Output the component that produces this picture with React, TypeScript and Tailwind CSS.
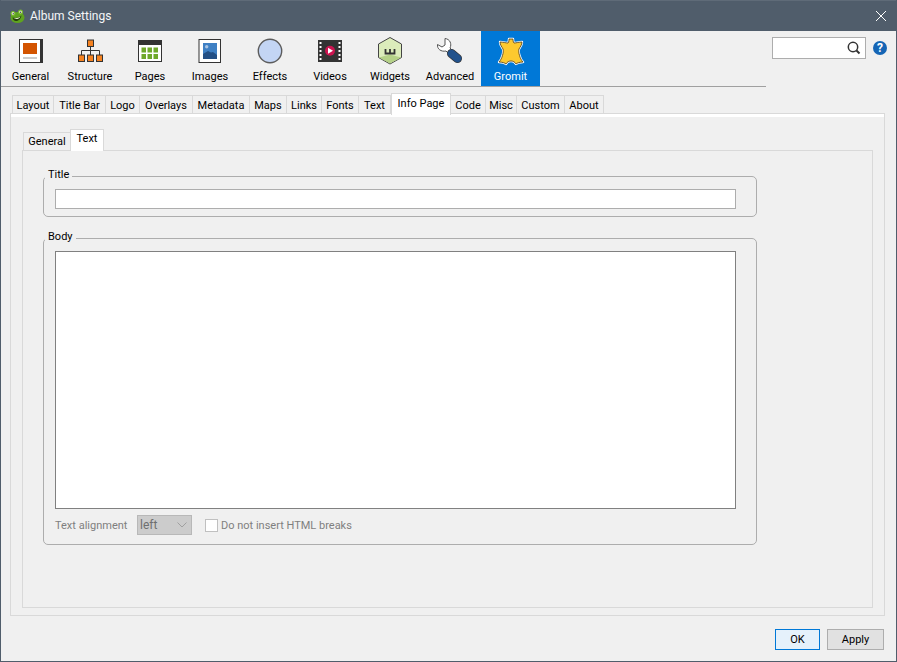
const font = "font-['Roboto','Noto_Sans',sans-serif]"

function GeneralIcon() {
  return (
    <svg width="32" height="32" viewBox="0 0 32 32">
      <rect x="4.5" y="4.5" width="23" height="23" fill="#fff" stroke="#333" />
      <rect x="25" y="4" width="3" height="24" fill="#333" />
      <rect x="8" y="8" width="14" height="11" fill="#d35400" />
      <rect x="8" y="22" width="14" height="2" fill="#ccc" />
    </svg>
  )
}

function StructureIcon() {
  const boxes = [[13.5, 5], [4.5, 20], [13.5, 20], [22.5, 20]]
  return (
    <svg width="32" height="32" viewBox="0 0 32 32">
      <path d="M16.500 12v8M7.500 20v-4.500h18V20" fill="none" stroke="#333" />
      {boxes.map((b, i) => (
        <rect key={i} x={b[0]} y={b[1]} width="6" height="6.500" fill="#f58220" stroke="#333" />
      ))}
    </svg>
  )
}

function PagesIcon() {
  const cells = [[7.5, 12.5], [13.5, 12.5], [19.5, 12.5], [7.5, 19], [13.5, 19], [19.5, 19]]
  return (
    <svg width="32" height="32" viewBox="0 0 32 32">
      <rect x="4.500" y="5.500" width="23" height="21" fill="#fff" stroke="#333" />
      <rect x="4" y="5" width="24" height="5" fill="#333" />
      {cells.map((c, i) => (
        <rect key={i} x={c[0]} y={c[1]} width="4.500" height="5" fill="#6fa82a" />
      ))}
    </svg>
  )
}

function ImagesIcon() {
  return (
    <svg width="32" height="32" viewBox="0 0 32 32">
      <rect x="5" y="4.500" width="21.500" height="23" fill="#fff" stroke="#333" />
      <rect x="9" y="8" width="14" height="16" fill="#3f80c4" />
      <circle cx="12.700" cy="11.700" r="1.700" fill="#a9c4e4" />
      <path d="M9 19l5-3 3 1.500 2-.5 4 3v4H9z" fill="#234f85" />
    </svg>
  )
}

function EffectsIcon() {
  return (
    <svg width="32" height="32" viewBox="0 0 32 32">
      <circle cx="16" cy="16" r="11.700" fill="#c3d5f4" stroke="#5c5c5c" strokeWidth="1.400" />
    </svg>
  )
}

function VideosIcon() {
  const holes = [7, 11, 15, 19, 23]
  return (
    <svg width="32" height="32" viewBox="0 0 32 32">
      <rect x="4" y="5" width="24" height="22" fill="#333" />
      {holes.map((y) => (
        <g key={y}>
          <rect x="5.500" y={y} width="2" height="2" fill="#fff" />
          <rect x="24.500" y={y} width="2" height="2" fill="#fff" />
        </g>
      ))}
      <circle cx="16" cy="15.700" r="5" fill="#cc1450" />
      <path d="M14 12.700v6l5-3z" fill="#fff" />
    </svg>
  )
}

function WidgetsIcon() {
  return (
    <svg width="32" height="32" viewBox="0 0 32 32">
      <path d="M16 2.500l11.500 6.500v13.500L16 29 4.500 22.500V9z" fill="#dcecbb" stroke="#444" />
      <path d="M16 28.500L5 22.500l11-3 11 3z" fill="#b5d188" />
      <path d="M11.500 14v4.500h9V14M16 14v4.500" fill="none" stroke="#333" strokeWidth="1.800" />
    </svg>
  )
}

function AdvancedIcon() {
  return (
    <svg width="32" height="32" viewBox="0 0 32 32">
      <path d="M11 3.500C16 4 18 9 16 13l4 4-4 3-4-4C7 17 3 14 3.500 9.500L8 12l3-2z" fill="#fff" stroke="#555" />
      <path d="M17.500 18.500l6 5" stroke="#333" strokeWidth="9" strokeLinecap="round" />
      <path d="M17.500 18.500l6 5" stroke="#22528c" strokeWidth="7.500" strokeLinecap="round" />
    </svg>
  )
}

function GromitIcon() {
  const hide =
    "M13 8C14 7 14 5 14 4L18 4C18 5 18 7 19 8C21 8 24 7 27 7C27 10 25 12 24 14C23 17 25 24 28 27C25 27 22 28 21 29C20 27 18 26 16 26C14 26 12 27 11 29C10 28 7 27 4 27C7 24 9 17 8 14C7 12 5 10 5 7C8 7 11 8 13 8Z"
  return (
    <svg width="32" height="32" viewBox="0 0 32 32">
      <path d={hide} fill="#fff" stroke="#fff" strokeWidth="2.400" strokeLinejoin="round" />
      <path d={hide} fill="#fdc92f" stroke="#4a3a1a" strokeWidth="0.800" strokeLinejoin="round" />
    </svg>
  )
}

function FrogLogo() {
  return (
    <svg width="16" height="16" viewBox="0 0 16 16">
      <ellipse cx="8.500" cy="9.500" rx="7" ry="5.500" fill="#5fa31f" />
      <circle cx="4" cy="5.500" r="2.500" fill="#78b82e" />
      <circle cx="11.500" cy="4" r="2.500" fill="#78b82e" />
      <circle cx="4" cy="5.500" r="1.200" fill="#fff" />
      <circle cx="11.500" cy="4" r="1.200" fill="#fff" />
      <circle cx="4.200" cy="5.700" r="0.600" fill="#222" />
      <circle cx="11.500" cy="4.200" r="0.600" fill="#222" />
      <path d="M3.500 9.500c3 1 6 .5 9-2-.5 3-2.500 5.500-5.500 5.500-2 0-3-1.500-3.500-3.500z" fill="#26400c" />
      <path d="M4.500 10c2.500.5 5 0 7-1.500-.5 1-1.500 2-3 2.500-1.500.3-3 0-4-1z" fill="#e8f2d0" />
    </svg>
  )
}

const tools = [
  { label: "General", icon: <GeneralIcon /> },
  { label: "Structure", icon: <StructureIcon /> },
  { label: "Pages", icon: <PagesIcon /> },
  { label: "Images", icon: <ImagesIcon /> },
  { label: "Effects", icon: <EffectsIcon /> },
  { label: "Videos", icon: <VideosIcon /> },
  { label: "Widgets", icon: <WidgetsIcon /> },
  { label: "Advanced", icon: <AdvancedIcon /> },
  { label: "Gromit", icon: <GromitIcon />, active: true },
]

const tabs = [
  { label: "Layout", w: "w-[42px]" },
  { label: "Title Bar", w: "w-[52px]" },
  { label: "Logo", w: "w-[34px]" },
  { label: "Overlays", w: "w-[53px]" },
  { label: "Metadata", w: "w-[57px]" },
  { label: "Maps", w: "w-[37px]" },
  { label: "Links", w: "w-[35px]" },
  { label: "Fonts", w: "w-[37px]" },
  { label: "Text", w: "w-[32px]" },
  { label: "Info Page", w: "w-[60px]", active: true },
  { label: "Code", w: "w-[35px]" },
  { label: "Misc", w: "w-[31px]" },
  { label: "Custom", w: "w-[48px]" },
  { label: "About", w: "w-[39px]" },
]

export default function App() {
  return (
    <div className={`${font} w-[897px] h-[662px] flex flex-col bg-[#f0f0f0] border-x border-b border-[#505d6b] text-[11px] leading-none text-black overflow-hidden`}>
      <div className="h-[31px] -mx-px shrink-0 bg-[#505d6b] flex items-center pl-[9px] pr-[11px] border-t border-[#5f6b78] text-[#f4f6f8] text-[12px]">
        <FrogLogo />
        <span className="ml-[5px]">Album Settings</span>
        <svg className="ml-auto" width="10" height="10" viewBox="0 0 10 10">
          <path d="M0 0l10 10M10 0L0 10" stroke="#fff" strokeWidth="1" />
        </svg>
      </div>

      <div className="flex h-[56px] shrink-0">
        <div className="w-[765px] h-[56px] flex border-b border-[#a0a0a0]">
          {tools.map((t) => (
            <div
              key={t.label}
              className={`first:w-[59px] flex flex-col items-center pt-[4px] ${t.active ? "ml-px w-[59px] bg-[#0078d7] text-white" : "w-[60px]"}`}
            >
              <div className="h-[32px] flex items-center justify-center">{t.icon}</div>
              <div className="mt-[4px] whitespace-nowrap">{t.label}</div>
            </div>
          ))}
        </div>
        <div className="ml-[6px] mt-[6px] w-[94px] h-[22px] bg-white border border-[#adadad] flex items-center justify-end pr-[4px]">
          <svg width="14" height="14" viewBox="0 0 14 14">
            <circle cx="6" cy="6" r="4.700" fill="none" stroke="#333" strokeWidth="1.500" />
            <path d="M9.500 9.500l3 3" stroke="#333" strokeWidth="2" />
          </svg>
        </div>
        <div className="ml-[7px] mt-[10px] w-[14px] h-[14px] rounded-full bg-[#1565b5] text-white font-bold text-[12px] flex items-center justify-center">
          ?
        </div>
      </div>

      <div className="flex pl-[11px] pt-[8px] h-[26px] shrink-0 items-end relative z-10">
        {tabs.map((t) => (
          <div
            key={t.label}
            className={`${t.w} flex items-center justify-center whitespace-nowrap border-t border-r border-[#d9d9d9] first:border-l ${
              t.active
                ? "h-[22px] bg-white border-l -mb-[2px] pb-[2px]"
                : "h-[18px] pt-[2px] bg-[#f0f0f0]"
            }`}
          >
            {t.label}
          </div>
        ))}
      </div>

      <div className="ml-[9px] w-[875px] h-[503px] shrink-0 border border-[#d9d9d9] bg-[#f0f0f0] shadow-[inset_0_3px_0_#fff] flex flex-col pt-[14px] px-[11px] pb-[7px]">
        <div className="flex h-[22px] items-end pl-[1px] shrink-0 relative z-10">
          <div className="w-[47px] h-[18px] border-t border-l border-[#d9d9d9] flex items-center justify-center pb-[1px]">General</div>
          <div className="w-[34px] h-[22px] -mb-px bg-white border-t border-x border-[#d9d9d9] flex items-center justify-center pb-[4px]">Text</div>
        </div>
        <div className="flex-1 border border-[#d9d9d9] pl-[20px] pt-[17px]">
          <fieldset className="w-[714px] h-[49px] border border-[#adadad] rounded-[5px] pl-[11px] pr-[20px]">
            <legend className="ml-[-10px] px-[3px] h-[16px] leading-[14px]">Title</legend>
            <div className="h-[20px] bg-white border border-[#adadad] mt-[5px]"></div>
          </fieldset>
          <fieldset className="mt-[13px] w-[714px] h-[315px] border border-[#adadad] rounded-[5px] pl-[11px] pr-[20px]">
            <legend className="ml-[-10px] px-[3px] h-[16px] leading-[14px]">Body</legend>
            <div className="h-[258px] bg-white border border-[#808080] mt-[5px]"></div>
            <div className="flex items-center h-[20px] mt-[6px] text-[#7f7f7f]">
              <span className="w-[82px] pt-[1px] whitespace-nowrap">Text alignment</span>
              <div className="w-[55px] h-[20px] bg-[#cccccc] border border-[#b8b8b8] text-[#6f6f6f] text-[12px] flex items-center pl-[2px] pr-[3px] justify-between">
                left
                <svg width="12" height="8" viewBox="0 0 12 8">
                  <path d="M1.500 1.500L6 6l4.500-4.500" fill="none" stroke="#a0a0a0" />
                </svg>
              </div>
              <div className="ml-[13px] w-[13px] h-[13px] bg-white border border-[#c0c0c0]"></div>
              <span className="ml-[3px] pt-[1px] whitespace-nowrap">Do not insert HTML breaks</span>
            </div>
          </fieldset>
        </div>
      </div>

      <div className="flex justify-end gap-[7px] pr-[12px] pt-[13px]">
        <div className="w-[45px] h-[21px] bg-[#e5f1fb] border border-[#0078d7] flex items-center justify-center">OK</div>
        <div className="w-[57px] h-[21px] bg-[#e1e1e1] border border-[#adadad] flex items-center justify-center">Apply</div>
      </div>
    </div>
  )
}
